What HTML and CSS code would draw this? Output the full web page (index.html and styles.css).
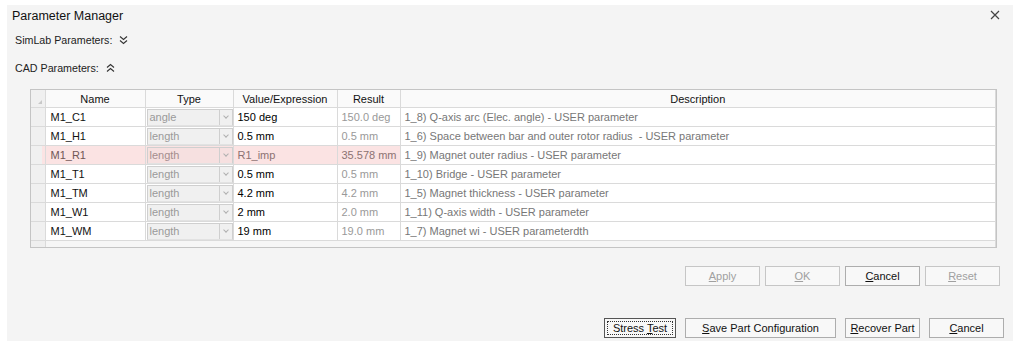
FILE: index.html
```html
<!DOCTYPE html>
<html lang="en">
<head>
    <meta charset="UTF-8">
    <title>Parameter Manager</title>
    <link rel="stylesheet" href="styles.css">
</head>
<body>
    <div class="dialog">
        <!-- 标题栏 -->
        <div class="title-bar">
            <span class="title">Parameter Manager</span>
            <svg class="close" width="10" height="10" viewBox="0 0 10 10">
                <path d="M1 1L9 9M9 1L1 9" stroke="#444" stroke-width="1.2" fill="none"/>
            </svg>
        </div>

        <div class="section simlab">
            <span>SimLab Parameters:</span>
            <svg class="chev" width="9" height="10" viewBox="0 0 9 10">
                <path d="M1 1.5L4.5 4.5L8 1.5M1 5.5L4.5 8.5L8 5.5" stroke="#333" stroke-width="1.1" fill="none"/>
            </svg>
        </div>
        <div class="section cad">
            <span>CAD Parameters:</span>
            <svg class="chev" width="9" height="10" viewBox="0 0 9 10">
                <path d="M1 4.5L4.5 1.5L8 4.5M1 8.5L4.5 5.5L8 8.5" stroke="#333" stroke-width="1.1" fill="none"/>
            </svg>
        </div>

        <!-- 参数表格 -->
        <div class="grid">
            <table>
                <colgroup>
                    <col style="width:14px">
                    <col style="width:100px">
                    <col style="width:88px">
                    <col style="width:104px">
                    <col style="width:63px">
                    <col>
                </colgroup>
                <thead>
                    <tr>
                        <th class="rh"><i class="corner"></i></th>
                        <th>Name</th>
                        <th>Type</th>
                        <th>Value/Expression</th>
                        <th>Result</th>
                        <th>Description</th>
                    </tr>
                </thead>
                <tbody>
                    <tr>
                        <td class="rh"></td>
                        <td class="name">M1_C1</td>
                        <td class="type"><div class="combo"><span>angle</span><b></b></div></td>
                        <td class="val">150 deg</td>
                        <td class="res">150.0 deg</td>
                        <td class="desc">1_8) Q-axis arc (Elec. angle) - USER parameter</td>
                    </tr>
                    <tr>
                        <td class="rh"></td>
                        <td class="name">M1_H1</td>
                        <td class="type"><div class="combo"><span>length</span><b></b></div></td>
                        <td class="val">0.5 mm</td>
                        <td class="res">0.5 mm</td>
                        <td class="desc">1_6) Space between bar and outer rotor radius&nbsp; - USER parameter</td>
                    </tr>
                    <tr class="err">
                        <td class="rh"></td>
                        <td class="name">M1_R1</td>
                        <td class="type"><div class="combo"><span>length</span><b></b></div></td>
                        <td class="val">R1_imp</td>
                        <td class="res">35.578 mm</td>
                        <td class="desc">1_9) Magnet outer radius - USER parameter</td>
                    </tr>
                    <tr>
                        <td class="rh"></td>
                        <td class="name">M1_T1</td>
                        <td class="type"><div class="combo"><span>length</span><b></b></div></td>
                        <td class="val">0.5 mm</td>
                        <td class="res">0.5 mm</td>
                        <td class="desc">1_10) Bridge - USER parameter</td>
                    </tr>
                    <tr>
                        <td class="rh"></td>
                        <td class="name">M1_TM</td>
                        <td class="type"><div class="combo"><span>length</span><b></b></div></td>
                        <td class="val">4.2 mm</td>
                        <td class="res">4.2 mm</td>
                        <td class="desc">1_5) Magnet thickness - USER parameter</td>
                    </tr>
                    <tr>
                        <td class="rh"></td>
                        <td class="name">M1_W1</td>
                        <td class="type"><div class="combo"><span>length</span><b></b></div></td>
                        <td class="val">2 mm</td>
                        <td class="res">2.0 mm</td>
                        <td class="desc">1_11) Q-axis width - USER parameter</td>
                    </tr>
                    <tr>
                        <td class="rh"></td>
                        <td class="name">M1_WM</td>
                        <td class="type"><div class="combo"><span>length</span><b></b></div></td>
                        <td class="val">19 mm</td>
                        <td class="res">19.0 mm</td>
                        <td class="desc">1_7) Magnet wi - USER parameterdth</td>
                    </tr>
                    <tr class="new-row">
                        <td class="rh"></td>
                        <td colspan="5"></td>
                    </tr>
                </tbody>
            </table>
        </div>

        <div class="buttons top-btns">
            <button class="btn" disabled><u>A</u>pply</button>
            <button class="btn" disabled><u>O</u>K</button>
            <button class="btn"><u>C</u>ancel</button>
            <button class="btn" disabled><u>R</u>eset</button>
        </div>

        <div class="buttons bottom-btns">
            <button class="btn stress">Stress <u>T</u>est</button>
            <button class="btn save"><u>S</u>ave Part Configuration</button>
            <button class="btn"><u>R</u>ecover Part</button>
            <button class="btn"><u>C</u>ancel</button>
        </div>
    </div>
</body>
</html>
```

FILE: styles.css
```css
html,body{
    margin: 0;
    background-color: #fff;
    font-family: "Liberation Sans", Arial, sans-serif;
    color: #1a1a1a;
}
.dialog{
    width: 1006px;
    height: 336px;
    margin: 5px 0 0 7px;
    background-color: #f4f4f4;
    display: flex;
    flex-direction: column;
}
.title-bar{
    height: 22px;
    display: flex;
    align-items: center;
    justify-content: space-between;
    padding: 0 13px 0 5px;
}
.title{
    font-size: 12.5px;
    color: #111;
}
.close{
    margin-top: -2px;
}
.section{
    display: flex;
    align-items: center;
    gap: 7px;
    padding-left: 8px;
    font-size: 10.7px;
    color: #222;
}
.simlab{
    height: 26px;
}
.cad{
    height: 26px;
    margin-top: 2px;
}
/* 表格 */
.grid{
    width: 965px;
    height: 157px;
    margin: 8px 0 0 23px;
    border: 1px solid #c4c4c4;
    background-color: #f6f6f6;
    overflow: hidden;
}
table{
    width: 100%;
    table-layout: fixed;
    border-collapse: collapse;
    font-size: 11px;
}
th,td{
    padding: 0 4px;
    border-right: 1px solid #dadada;
    border-bottom: 1px solid #dadada;
    white-space: nowrap;
    overflow: hidden;
    text-align: left;
}
th{
    height: 17px;
    font-weight: normal;
    text-align: center;
    color: #111;
    background-color: #fafafa;
}
td{
    height: 18px;
    background-color: #fff;
}
.rh{
    padding: 0;
    background-color: #f0f0f0;
    position: relative;
}
.corner{
    position: absolute;
    right: 3px;
    bottom: 3px;
    border-left: 4px solid transparent;
    border-bottom: 4px solid #c8c8c8;
}
.name{
    padding-left: 5px;
    color: #111;
}
.type{
    padding: 0 0 0 1px;
}
.combo{
    height: 17px;
    display: flex;
    border: 1px solid #cfcfcf;
    border-bottom-color: #e2e2e2;
    background-color: #f0f0f0;
    color: #9a9a9a;
    box-sizing: border-box;
}
.combo span{
    flex: 1;
    line-height: 15px;
    padding-left: 2px;
}
.combo b{
    width: 12px;
    border-left: 1px solid #cfcfcf;
    position: relative;
}
.combo b::after{
    content: "";
    position: absolute;
    left: 4px;
    top: 4px;
    width: 3px;
    height: 3px;
    border-right: 1px solid #b0b0b0;
    border-bottom: 1px solid #b0b0b0;
    transform: rotate(45deg);
}
.val{
    color: #000;
}
.res{
    color: #999;
}
.desc{
    color: #777;
}
/* 出错的行 */
.err td{
    background-color: #fbe3e3;
    color: #8c7272;
}
.err .rh{
    background: linear-gradient(to right, #f0f0f0 11px, #fbe3e3 11px);
}
.err .name{
    color: #705656;
}
.err .combo{
    background-color: #f6e0e0;
    color: #a48e8e;
}
.err .desc{
    background-color: #fff;
    color: #777;
}
.new-row td{
    height: 6px;
    border-bottom: none;
    background-color: #f6f6f6;
}
.new-row .rh{
    background-color: #efefef;
}
/* 按钮 */
.buttons{
    display: flex;
    justify-content: flex-end;
}
.top-btns{
    margin-top: 18px;
    padding-right: 13px;
    gap: 5px;
}
.bottom-btns{
    margin-top: 32px;
    padding-right: 9px;
    gap: 9px;
}
.btn{
    width: 75px;
    height: 20px;
    padding: 0;
    font-family: "Liberation Sans", Arial, sans-serif;
    font-size: 11px;
    color: #111;
    background-color: #f8f8f8;
    border: 1px solid #adadad;
    border-radius: 0;
}
.btn:disabled{
    color: #a0a0a0;
    border-color: #c6c6c6;
}
.stress{
    width: 72px;
    border-color: #555;
    outline: 1px dotted #333;
    outline-offset: -4px;
}
.save{
    width: 151px;
}
```
